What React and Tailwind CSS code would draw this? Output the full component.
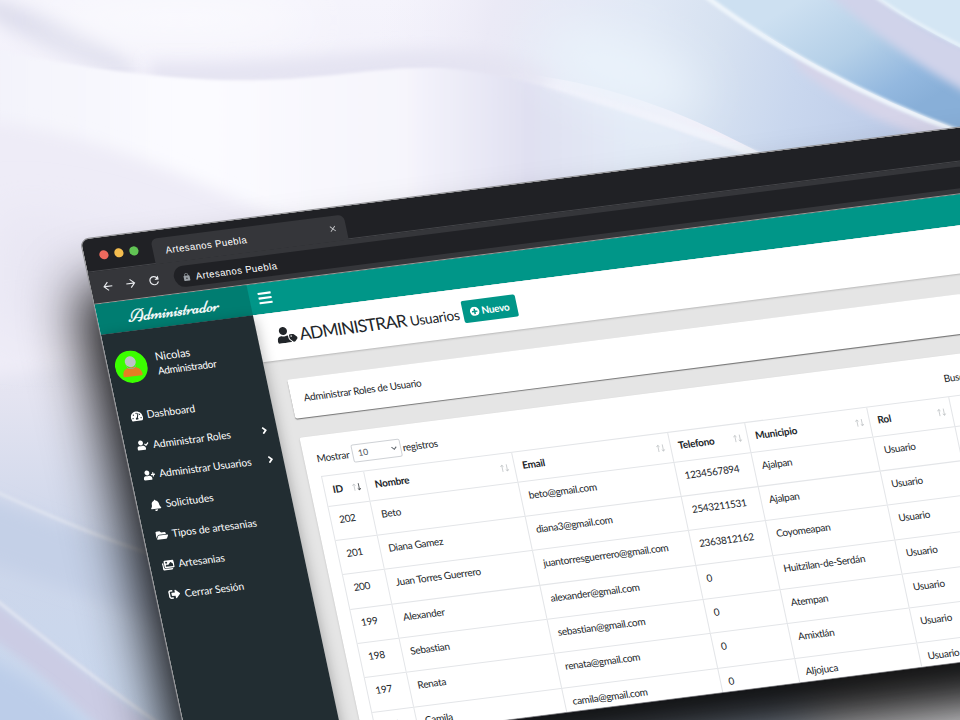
import React from "react";
import {
  FaTachometerAlt,
  FaUserCheck,
  FaUserPlus,
  FaBell,
  FaFolderOpen,
  FaImages,
  FaSignOutAlt,
  FaUserTag,
  FaPlusCircle,
  FaBars,
  FaAngleRight,
} from "react-icons/fa";
import { MdArrowBack, MdArrowForward, MdRefresh, MdClose, MdLock } from "react-icons/md";

const menu = [
  { label: "Dashboard", Icon: FaTachometerAlt },
  { label: "Administrar Roles", Icon: FaUserCheck, more: true },
  { label: "Administrar Usuarios", Icon: FaUserPlus, more: true },
  { label: "Solicitudes", Icon: FaBell },
  { label: "Tipos de artesanias", Icon: FaFolderOpen },
  { label: "Artesanias", Icon: FaImages },
  { label: "Cerrar Sesión", Icon: FaSignOutAlt },
];

const columns = [
  { label: "ID", width: "w-[42px]", sorted: true },
  { label: "Nombre", width: "w-[147.5px]" },
  { label: "Email", width: "w-[156px]" },
  { label: "Telefono", width: "w-[77px]" },
  { label: "Municipio", width: "w-[122.3px]" },
  { label: "Rol", width: "w-[82.4px]" },
  { label: "Acciones", width: "w-[150px]" },
];

const rows = [
  ["202", "Beto", "beto@gmail.com", "1234567894", "Ajalpan", "Usuario", ""],
  ["201", "Diana Gamez", "diana3@gmail.com", "2543211531", "Ajalpan", "Usuario", ""],
  ["200", "Juan Torres Guerrero", "juantorresguerrero@gmail.com", "2363812162", "Coyomeapan", "Usuario", ""],
  ["199", "Alexander", "alexander@gmail.com", "0", "Huitzilan-de-Serdán", "Usuario", ""],
  ["198", "Sebastian", "sebastian@gmail.com", "0", "Atempan", "Usuario", ""],
  ["197", "Renata", "renata@gmail.com", "0", "Amixtlán", "Usuario", ""],
  ["196", "Camila", "camila@gmail.com", "0", "Aljojuca", "Usuario", ""],
];

function Backdrop() {
  return (
    <svg className="absolute inset-0" width="960" height="720" viewBox="0 0 960 720">
      <defs>
        <filter id="b2" x="-20%" y="-20%" width="140%" height="140%"><feGaussianBlur stdDeviation="1.5" /></filter>
        <filter id="b5" x="-30%" y="-30%" width="160%" height="160%"><feGaussianBlur stdDeviation="4" /></filter>
        <filter id="b8" x="-50%" y="-50%" width="200%" height="200%"><feGaussianBlur stdDeviation="8" /></filter>
        <filter id="b20" x="-80%" y="-80%" width="260%" height="260%"><feGaussianBlur stdDeviation="24" /></filter>
        <linearGradient id="base" x1="0" y1="0" x2="0" y2="1">
          <stop offset="0" stopColor="#f5f4fc" />
          <stop offset=".3" stopColor="#eeecf7" />
          <stop offset=".55" stopColor="#e4e4f1" />
          <stop offset=".75" stopColor="#cdd6ea" />
          <stop offset="1" stopColor="#c9d8ee" />
        </linearGradient>
        <linearGradient id="mid" gradientUnits="userSpaceOnUse" x1="0" y1="0" x2="960" y2="0">
          <stop offset="0" stopColor="#f3f3fb" />
          <stop offset=".2" stopColor="#fbfbff" />
          <stop offset=".42" stopColor="#f6f5fc" />
          <stop offset=".55" stopColor="#e0e0f1" />
          <stop offset=".66" stopColor="#e2eaf6" />
          <stop offset="1" stopColor="#dde4f3" />
        </linearGradient>
        <linearGradient id="fold" gradientUnits="userSpaceOnUse" x1="380" y1="20" x2="900" y2="150">
          <stop offset="0" stopColor="#f1effa" stopOpacity="0" />
          <stop offset=".2" stopColor="#ebeaf6" />
          <stop offset=".48" stopColor="#e0e8f5" />
          <stop offset=".62" stopColor="#d7e2f1" />
          <stop offset=".78" stopColor="#c9d7ee" />
          <stop offset="1" stopColor="#bccbe8" />
        </linearGradient>
        <linearGradient id="blue" gradientUnits="userSpaceOnUse" x1="800" y1="0" x2="880" y2="130">
          <stop offset="0" stopColor="#cde0f1" />
          <stop offset=".45" stopColor="#b5d0e8" />
          <stop offset=".8" stopColor="#93b8df" />
          <stop offset="1" stopColor="#88afd8" />
        </linearGradient>
        <linearGradient id="glow" gradientUnits="userSpaceOnUse" x1="540" y1="0" x2="770" y2="0">
          <stop offset="0" stopColor="#f3f4fc" stopOpacity="0" />
          <stop offset=".6" stopColor="#f0f3fb" />
          <stop offset="1" stopColor="#eef3fa" />
        </linearGradient>
      </defs>
      <rect width="960" height="720" fill="url(#base)" />
      <ellipse cx="55" cy="36" rx="90" ry="14" transform="rotate(24 55 36)" fill="#dedeed" filter="url(#b8)" />
      <ellipse cx="180" cy="20" rx="140" ry="18" fill="#fdfdff" filter="url(#b20)" />
      <path d="M380 -10H706C760 38 860 100 970 136L960 180L770 158C680 110 580 62 380 66Z" fill="url(#fold)" />
      <path d="M150 62C280 66 360 46 460 50C500 52 530 60 560 72L540 90L150 90Z" fill="#e5e4f2" filter="url(#b8)" />
      <path d="M0 50C60 64 130 76 220 80C320 83 370 66 440 68C540 74 640 120 780 164L780 300L0 300Z" fill="url(#mid)" filter="url(#b2)" />
      <ellipse cx="620" cy="70" rx="85" ry="34" transform="rotate(20 620 70)" fill="#eaf3fb" filter="url(#b20)" />
      <path d="M0 122C110 138 190 180 290 222C360 245 400 250 470 252L470 300L-20 380V122Z" fill="#eeecf7" filter="url(#b8)" />
      <path d="M0 215C100 220 150 250 240 280L240 330L0 330Z" fill="#e8e6f3" filter="url(#b20)" />
      <path d="M800 70C850 108 890 130 970 150V132C890 104 840 78 790 50Z" fill="#d6d4e9" filter="url(#b5)" />
      <path d="M706 -5C770 42 860 95 970 134V-10Z" fill="url(#blue)" />
      <path d="M818 -15C860 22 910 62 980 100V50C930 32 900 14 868 -15Z" fill="#d0d3ea" filter="url(#b5)" />
      <path d="M875 -5C900 16 930 32 965 50V-10Z" fill="#d4e6f4" />
      <path d="M704 -5C770 45 860 96 965 134" fill="none" stroke="#eef5fb" strokeWidth="5" filter="url(#b2)" />
      <path d="M873 -5C900 14 930 31 965 48" fill="none" stroke="#eaf3fa" strokeWidth="3" filter="url(#b2)" />
      <path d="M540 86C620 104 700 132 770 160" fill="none" stroke="url(#glow)" strokeWidth="7" filter="url(#b2)" />
      <path d="M-20 494C60 525 130 553 200 573L220 640L-20 560Z" fill="#c4d0e7" filter="url(#b8)" />
      <path d="M-5 491C60 521 120 546 190 566" fill="none" stroke="#dfe4f0" strokeWidth="3" filter="url(#b2)" />
      <path d="M-10 600C50 644 110 692 170 738L110 738C70 700 30 664 -10 636Z" fill="#cbcce4" filter="url(#b5)" />
      <path d="M-5 599C50 643 110 691 170 731" fill="none" stroke="#e0e5f1" strokeWidth="3" filter="url(#b2)" />
      <path d="M-20 655C30 675 60 705 100 740H-20Z" fill="#bccde9" filter="url(#b8)" />
      <ellipse cx="920" cy="710" rx="120" ry="60" fill="#f1f0f3" filter="url(#b20)" />
    </svg>
  );
}

function BrowserChrome() {
  return (
    <div className="h-[65px] w-full bg-[#202125] font-['Liberation_Sans',sans-serif] text-[9.500px] tracking-[0.4px] text-white">
      <div className="flex h-[33px] items-end border-b border-[#46474b] pl-[14.500px]">
        <div className="flex h-full w-[53px] items-center gap-[5.800px] pt-[3px]">
          <span className="size-[9.300px] rounded-full bg-[#ed6a5e]" />
          <span className="size-[9.300px] rounded-full bg-[#f4bd4f]" />
          <span className="size-[9.300px] rounded-full bg-[#61c454]" />
        </div>
        <div className="-mb-px flex h-[25px] w-[193px] items-center justify-between rounded-t-[6px] bg-[#35363a] pr-[8px] pl-[13px]">
          <span className="pt-[2px] whitespace-nowrap">Artesanos Puebla</span>
          <MdClose className="size-[9.500px] text-[#c9cacd]" />
        </div>
      </div>
      <div className="flex h-[32px] items-center border-b border-[#a09a98] bg-[#35363a] pl-[9.500px]">
        <div className="flex w-[73px] items-center gap-[9.800px] text-[#e8eaed]">
          <MdArrowBack className="size-[13.500px]" />
          <MdArrowForward className="size-[13.500px]" />
          <MdRefresh className="size-[14px]" />
        </div>
        <div className="flex h-[20.500px] flex-1 items-center gap-[5px] rounded-l-full bg-[#202125] pl-[8px]">
          <MdLock className="mt-px size-[9px] text-[#9aa0a6]" />
          <span className="pt-[3px] whitespace-nowrap">Artesanos Puebla</span>
        </div>
      </div>
    </div>
  );
}

function Avatar() {
  return (
    <svg className="size-[32px]" viewBox="0 0 32 32">
      <circle cx="16" cy="16" r="16" fill="#3bff00" />
      <path d="M6.500 24.500C6.500 19 10 16.500 16 16.500S25.500 19 25.500 24.500Q25.500 25.500 24.500 25.500H7.500Q6.500 25.500 6.500 24.500Z" fill="#e67e22" />
      <circle cx="16" cy="11" r="5.400" fill="#bdc3c7" />
      <path d="M11 14a5.400 5.400 0 0 0 10 0q-.5 4.200-5 4.200T11 14Z" fill="#95a5a6" />
    </svg>
  );
}

function Sidebar() {
  return (
    <aside className="relative z-10 h-full w-[152px] shrink-0 bg-[#222d32] text-white shadow-[0_4px_14px_rgba(0,0,0,0.3)]">
      <div className="flex items-center gap-[9px] pt-[19px] pl-[7px]">
        <Avatar />
        <div className="leading-[14px] whitespace-nowrap">
          <p className="text-[11px]">Nicolas</p>
          <p className="text-[10px] tracking-[-0.3px]">Administrador</p>
        </div>
      </div>
      <nav className="pt-[18px]">
        {menu.map(({ label, Icon, more }) => (
          <div key={label} className="flex h-[29.800px] items-center pr-[7px] pl-[11.800px] text-[10.200px] tracking-[-0.05px] whitespace-nowrap">
            <Icon className="mr-[4.300px] h-[11.500px] w-[12px] shrink-0" />
            <span className="flex-1">{label}</span>
            {more && <FaAngleRight className="size-[11px]" />}
          </div>
        ))}
      </nav>
    </aside>
  );
}

function SortMark({ sorted }) {
  return (
    <svg className="mr-[5px] h-[8px] w-[9px]" viewBox="0 0 9 8" fill="none" strokeWidth="0.8">
      <path d="M2.200 7.500V.8M.7 2.400L2.200.8L3.700 2.400" stroke="#c3c6c9" />
      <path d="M6.800.5V7.200M5.300 5.600L6.800 7.200L8.300 5.600" stroke={sorted ? "#43474b" : "#c3c6c9"} />
    </svg>
  );
}

function UsersTable() {
  return (
    <div className="mt-[8.500px] ml-[13.300px] w-[778px] border-t border-l border-[#e3e5e8]">
      <div className="flex h-[29.500px] border-b border-[#e3e5e8] font-bold">
        {columns.map((c) => (
          <div key={c.label} className={`${c.width} flex shrink-0 items-center justify-between border-r border-[#e3e5e8] pb-[1px] pl-[7.500px]`}>
            <span>{c.label}</span>
            <SortMark sorted={c.sorted} />
          </div>
        ))}
      </div>
      {rows.map((r) => (
        <div key={r[0]} className="flex h-[34.400px] border-b border-[#e3e5e8]">
          {r.map((cell, i) => (
            <div key={i} className={`${columns[i].width} shrink-0 border-r border-[#e3e5e8] pt-[6px] pl-[7.500px] leading-[14px]`}>
              {cell}
            </div>
          ))}
        </div>
      ))}
    </div>
  );
}

function Content() {
  return (
    <main className="min-w-0 flex-1 bg-[#e5e5e5] text-[9.900px] tracking-[-0.27px] whitespace-nowrap text-[#212529]">
      <div className="flex h-[47.500px] items-center bg-white pl-[19px] shadow-[0_1px_2px_rgba(0,0,0,0.2)]">
        <FaUserTag className="mr-[2.500px] h-[16px] w-[20px]" />
        <h1 className="text-[17px] leading-none tracking-[-0.750px]">
          ADMINISTRAR <span className="text-[13.500px] tracking-[-0.250px]">Usuarios</span>
        </h1>
        <button className="ml-[3.500px] flex h-[22px] w-[54.500px] items-center justify-center gap-[2px] rounded-[2px] bg-[#009688] font-bold text-white">
          <FaPlusCircle className="size-[9.500px]" />
          Nuevo
        </button>
      </div>
      <div className="flex flex-col gap-[19px] pt-[20px] pl-[20px]">
        <section className="flex h-[39px] items-center rounded-[2px] bg-white pl-[12.500px] shadow-[0_1px_1px_rgba(0,0,0,0.5)]">
          Administrar Roles de Usuario
        </section>
        <section className="h-[330px] rounded-[2px] bg-white pt-[13px] shadow-[0_1px_2px_rgba(0,0,0,0.2)]">
          <div className="flex h-[18.500px] items-center pl-[12.500px]">
            <span className="w-[35.500px]">Mostrar</span>
            <span className="flex h-[18px] w-[48.500px] items-center justify-between rounded-[2px] border border-[#cfd2d6] pr-[3px] pl-[5px] text-[8.500px] tracking-normal text-[#495057]">
              10
              <svg width="6" height="4" viewBox="0 0 6 4" fill="none" stroke="#5a6067"><path d="M.6.6L3 3L5.400.6" /></svg>
            </span>
            <span className="ml-[2px] w-[541px]">registros</span>
            <span>Buscar:</span>
          </div>
          <UsersTable />
        </section>
      </div>
    </main>
  );
}

export default function App() {
  return (
    <div className="relative h-[720px] w-[960px] overflow-hidden font-[Lato,'Open_Sans',sans-serif]">
      <Backdrop />
      <div className="h-[520px] w-[1300px] origin-top-left [transform:matrix(1,-0.1275,0.2125,1,80.7,239.7)] overflow-hidden rounded-t-[8px] bg-white shadow-[0_0_0_1px_#8e8e92,-16px_47px_56px_0_rgba(0,0,0,0.94)]">
        <BrowserChrome />
        <header className="flex h-[29.500px] items-center bg-[#009688] text-white">
          <div className="flex h-full w-[152px] items-center justify-center bg-[#007d71] pt-[2px] pr-[2px] font-[Niconne,'Liberation_Serif',serif] text-[16.800px] italic [-webkit-text-stroke:0.25px_white]">
            Administrador
          </div>
          <FaBars className="ml-[8px] h-[15px] w-[15px]" />
        </header>
        <div className="flex h-[425.500px]">
          <Sidebar />
          <Content />
        </div>
      </div>
    </div>
  );
}
